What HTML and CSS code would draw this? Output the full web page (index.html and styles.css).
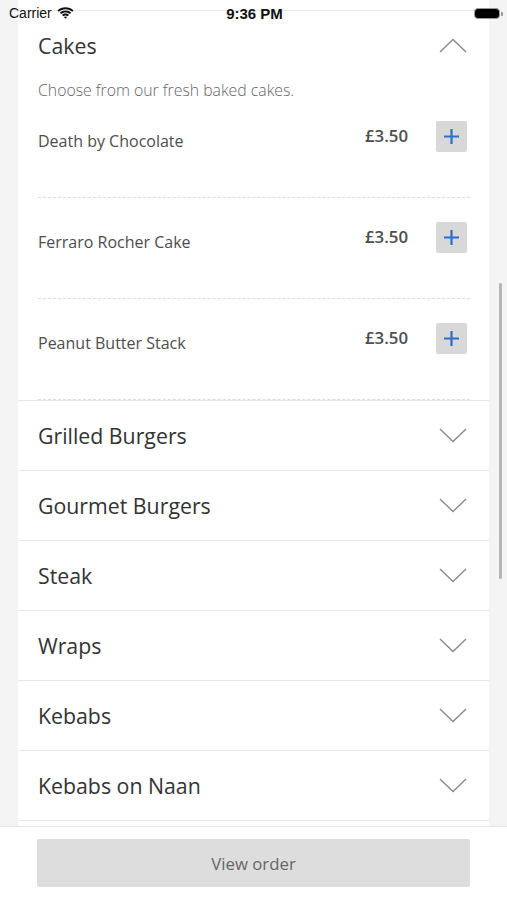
FILE: index.html
```html
<!DOCTYPE html>
<html>
<head>
    <title>Menu</title>
    <meta name="viewport" content="width=device-width, initial-scale=1" />
    <link rel="stylesheet" href="styles.css">
</head>
<body>
    <div class="status-bar">
        <div class="carrier">
            Carrier
            <svg class="wifi" width="17" height="12" viewBox="0 0 17 12">
                <path d="M8.5 2.2c2.6 0 4.9 1 6.7 2.6l1.3-1.4C14.4 1.4 11.6.2 8.5.2S2.6 1.4.5 3.4l1.3 1.4C3.6 3.2 5.9 2.2 8.5 2.2z" fill="#111"/>
                <path d="M8.5 5.4c1.7 0 3.2.6 4.4 1.7l1.3-1.4C12.7 4.3 10.7 3.4 8.5 3.4S4.3 4.3 2.8 5.7l1.3 1.4c1.2-1.1 2.7-1.7 4.4-1.7z" fill="#111"/>
                <path d="M8.5 8.5c.9 0 1.6.3 2.2.8L12 7.9c-.9-.9-2.2-1.4-3.5-1.4S5.9 7 5 7.9l1.3 1.4c.6-.5 1.3-.8 2.2-.8zM8.5 11.8l1.6-1.7c-.4-.4-1-.6-1.6-.6s-1.2.2-1.6.6z" fill="#111"/>
            </svg>
        </div>
        <div class="clock">9:36 PM</div>
        <div class="battery"><span class="battery-level"></span></div>
    </div>

    <div class="menu">
        <div class="card">
            <section class="category open">
                <div class="cat-head">
                    <h2>Cakes</h2>
                    <svg class="chevron" width="28" height="15" viewBox="0 0 28 15">
                        <path d="M1 14L14 1.5 27 14" fill="none" stroke="#8a8a8a" stroke-width="1.4"/>
                    </svg>
                </div>
                <div class="cat-body">
                    <p class="cat-desc">Choose from our fresh baked cakes.</p>
                    <div class="item">
                        <div class="item-name">Death by Chocolate</div>
                        <div class="item-price">£3.50</div>
                        <button class="add-btn">
                            <svg width="15" height="15" viewBox="0 0 15 15"><path d="M7.5 0v15M0 7.5h15" stroke="#2b6fcd" stroke-width="2.2"/></svg>
                        </button>
                    </div>
                    <div class="item">
                        <div class="item-name">Ferraro Rocher Cake</div>
                        <div class="item-price">£3.50</div>
                        <button class="add-btn">
                            <svg width="15" height="15" viewBox="0 0 15 15"><path d="M7.5 0v15M0 7.5h15" stroke="#2b6fcd" stroke-width="2.2"/></svg>
                        </button>
                    </div>
                    <div class="item">
                        <div class="item-name">Peanut Butter Stack</div>
                        <div class="item-price">£3.50</div>
                        <button class="add-btn">
                            <svg width="15" height="15" viewBox="0 0 15 15"><path d="M7.5 0v15M0 7.5h15" stroke="#2b6fcd" stroke-width="2.2"/></svg>
                        </button>
                    </div>
                </div>
            </section>

            <section class="category">
                <div class="cat-head">
                    <h2>Grilled Burgers</h2>
                    <svg class="chevron" width="28" height="15" viewBox="0 0 28 15">
                        <path d="M1 1L14 13.5 27 1" fill="none" stroke="#8a8a8a" stroke-width="1.4"/>
                    </svg>
                </div>
            </section>
            <section class="category">
                <div class="cat-head">
                    <h2>Gourmet Burgers</h2>
                    <svg class="chevron" width="28" height="15" viewBox="0 0 28 15">
                        <path d="M1 1L14 13.5 27 1" fill="none" stroke="#8a8a8a" stroke-width="1.4"/>
                    </svg>
                </div>
            </section>
            <section class="category">
                <div class="cat-head">
                    <h2>Steak</h2>
                    <svg class="chevron" width="28" height="15" viewBox="0 0 28 15">
                        <path d="M1 1L14 13.5 27 1" fill="none" stroke="#8a8a8a" stroke-width="1.4"/>
                    </svg>
                </div>
            </section>
            <section class="category">
                <div class="cat-head">
                    <h2>Wraps</h2>
                    <svg class="chevron" width="28" height="15" viewBox="0 0 28 15">
                        <path d="M1 1L14 13.5 27 1" fill="none" stroke="#8a8a8a" stroke-width="1.4"/>
                    </svg>
                </div>
            </section>
            <section class="category">
                <div class="cat-head">
                    <h2>Kebabs</h2>
                    <svg class="chevron" width="28" height="15" viewBox="0 0 28 15">
                        <path d="M1 1L14 13.5 27 1" fill="none" stroke="#8a8a8a" stroke-width="1.4"/>
                    </svg>
                </div>
            </section>
            <section class="category">
                <div class="cat-head">
                    <h2>Kebabs on Naan</h2>
                    <svg class="chevron" width="28" height="15" viewBox="0 0 28 15">
                        <path d="M1 1L14 13.5 27 1" fill="none" stroke="#8a8a8a" stroke-width="1.4"/>
                    </svg>
                </div>
            </section>
            <section class="category">
                <div class="cat-head">
                    <h2>Pizzas</h2>
                </div>
            </section>
        </div>
    </div>

    <div class="scrollbar"></div>

    <div class="footer">
        <button class="view-order">View order</button>
    </div>
</body>
</html>
```

FILE: styles.css
```css
body {
    margin: 0;
    height: 900px;
    overflow: hidden;
    background-color: #f4f4f4;
    font-family: "Open Sans", "Noto Sans", sans-serif;
    color: #333;
}

/* status bar sits over the list */
.status-bar {
    position: absolute;
    top: 0;
    left: 0;
    right: 0;
    height: 26px;
    display: flex;
    align-items: center;
    justify-content: space-between;
    padding: 0 7px 0 9px;
    font-family: "Liberation Sans", Arial, sans-serif;
    z-index: 2;
}

.carrier {
    display: flex;
    align-items: center;
    gap: 5px;
    font-size: 14px;
    color: #111;
    width: 120px;
}

.clock {
    font-size: 15px;
    font-weight: bold;
    color: #111;
}

.battery {
    width: 120px;
    display: flex;
    justify-content: flex-end;
}

.battery-level {
    display: block;
    width: 24px;
    height: 9px;
    background-color: #000;
    border: 1.5px solid #999;
    border-radius: 4px;
    position: relative;
}

.battery-level::after {
    content: "";
    position: absolute;
    right: -4px;
    top: 3px;
    width: 2px;
    height: 4px;
    background-color: #999;
    border-radius: 0 1px 1px 0;
}

.menu {
    padding: 0 18px;
}

.card {
    background-color: #fff;
    padding-top: 10px;
}

.category {
    border-top: 1px solid #e6e6e6;
}

.cat-head {
    height: 69px;
    display: flex;
    align-items: center;
    justify-content: space-between;
    padding: 0 22px 0 20px;
}

.cat-head h2 {
    margin: 0;
    font-size: 21.3px;
    font-weight: normal;
    color: #333;
}

.chevron {
    display: block;
}

.cat-body {
    padding: 0 22px 0 20px;
}

.cat-desc {
    margin: 0;
    height: 17px;
    font-size: 15.8px;
    line-height: 20px;
    font-weight: 300;
    color: #666;
}

.item {
    display: flex;
    align-items: flex-start;
    padding: 24px 0 45px;
    border-bottom: 1px dashed #dcdcdc;
    margin-right: -3px;
}

.item-name {
    flex: 1;
    margin-top: 9px;
    font-size: 16px;
    color: #4d4d4d;
    font-weight: 500;
}

.item-price {
    margin-top: 3px;
    font-size: 16.8px;
    font-weight: 600;
    color: #4d4d4d;
}

.add-btn {
    margin: 0 3px 0 28px;
    width: 31px;
    height: 31px;
    padding: 0;
    border: none;
    border-radius: 2px;
    background-color: #d8d8d8;
    display: flex;
    align-items: center;
    justify-content: center;
}

.add-btn svg {
    display: block;
}

.scrollbar {
    position: absolute;
    left: 499px;
    top: 283px;
    width: 3px;
    height: 296px;
    border-radius: 2px;
    background-color: #b5b5b5;
}

.footer {
    position: absolute;
    left: 0;
    right: 0;
    bottom: 0;
    box-sizing: border-box;
    height: 74px;
    background-color: #fff;
    border-top: 1px solid #e4e4e4;
    padding: 12px 37px 0;
}

.view-order {
    display: block;
    width: 100%;
    height: 48px;
    border: none;
    border-radius: 2px;
    background-color: #dddddd;
    color: #666;
    font-family: "Open Sans", "Noto Sans", sans-serif;
    font-size: 16.8px;
}
```
